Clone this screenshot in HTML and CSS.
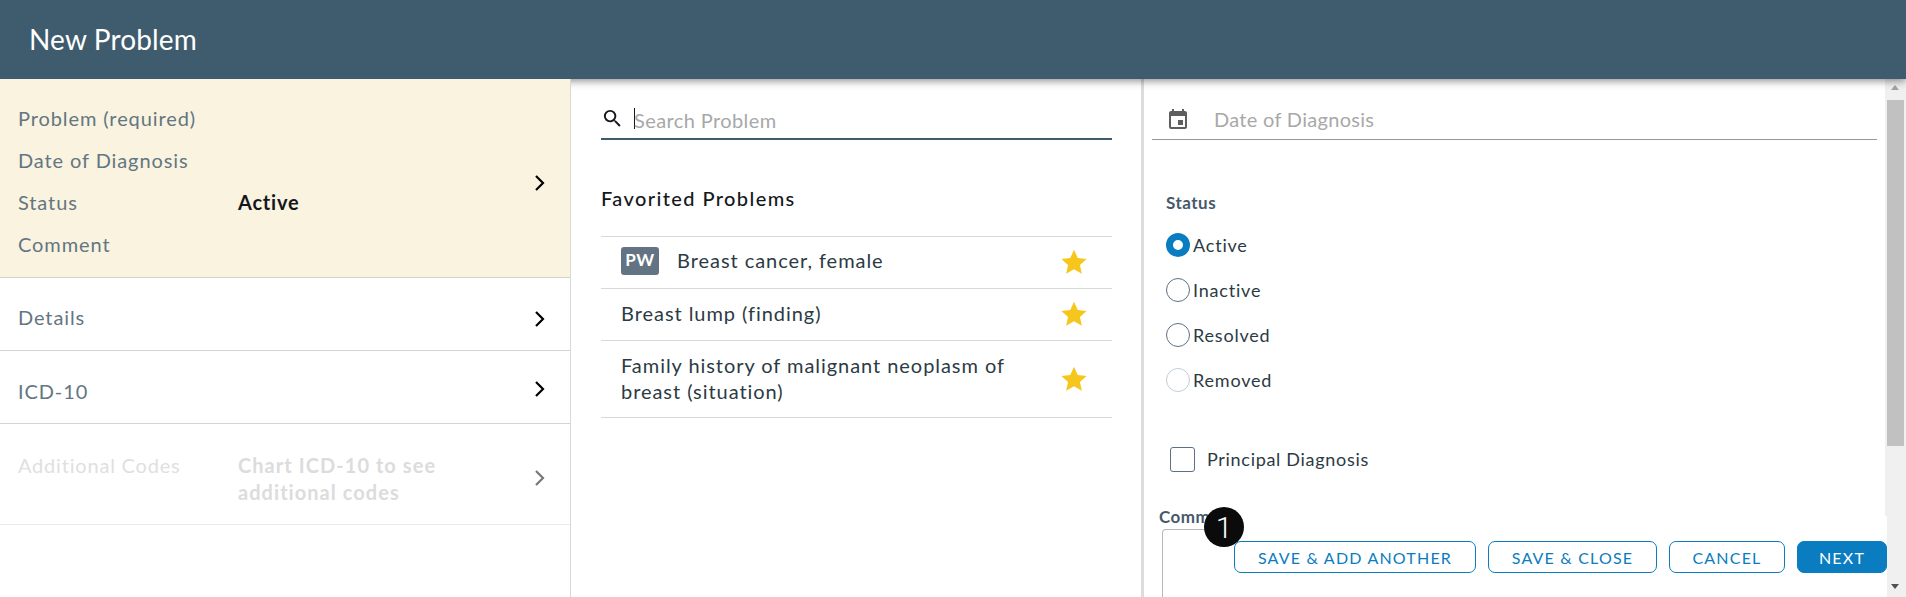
FILE: index.html
```html
<!DOCTYPE html>
<html lang="en">
<head>
<meta charset="utf-8">
<title>New Problem</title>
<link rel="stylesheet" href="styles.css">
</head>
<body>
<header class="topbar"><h1 class="title">New Problem</h1></header>
<main class="layout">
  <nav class="steps">
    <div class="step step-active">
      <div class="step-grid">
        <span class="step-label">Problem (required)</span><span></span>
        <span class="step-label">Date of Diagnosis</span><span></span>
        <span class="step-label">Status</span><span class="step-value">Active</span>
        <span class="step-label">Comment</span><span></span>
      </div>
      <svg class="chev" viewBox="0 0 12 18"><path d="M2 2l7 7-7 7" /></svg>
    </div>
    <div class="step step-plain">
      <span class="step-label">Details</span>
      <svg class="chev" viewBox="0 0 12 18"><path d="M2 2l7 7-7 7" /></svg>
    </div>
    <div class="step step-plain step-icd">
      <span class="step-label">ICD-10</span>
      <svg class="chev chev-up" viewBox="0 0 12 18"><path d="M2 2l7 7-7 7" /></svg>
    </div>
    <div class="step step-disabled">
      <span class="step-label">Additional Codes</span>
      <span class="step-value">Chart ICD-10 to see additional codes</span>
      <svg class="chev" viewBox="0 0 12 18"><path d="M2 2l7 7-7 7" /></svg>
    </div>
  </nav>

  <section class="middle">
    <div class="search">
      <svg class="search-icon" viewBox="0 0 24 24"><path d="M15.5 14h-.79l-.28-.27A6.47 6.47 0 0 0 16 9.5 6.5 6.5 0 1 0 9.5 16c1.61 0 3.09-.59 4.23-1.57l.27.28v.79l5 4.99L20.49 19l-4.99-5zm-6 0C7.01 14 5 11.99 5 9.5S7.01 5 9.5 5 14 7.01 14 9.5 11.99 14 9.5 14z"/></svg>
      <span class="caret"></span><span class="placeholder">Search Problem</span>
    </div>
    <h2 class="fav-title">Favorited Problems</h2>
    <ul class="fav-list">
      <li class="fav-item fav-first"><span class="badge">PW</span><span class="fav-text">Breast cancer, female</span>
        <svg class="star" viewBox="0 0 24 24"><path d="M12 1.5l3.2 7.1 7.6.8-5.7 5.1 1.6 7.6L12 18.3l-6.7 3.8 1.6-7.6L1.200 9.400l7.600-.8z"/></svg></li>
      <li class="fav-item"><span class="fav-text">Breast lump (finding)</span>
        <svg class="star" viewBox="0 0 24 24"><path d="M12 1.5l3.2 7.1 7.6.8-5.7 5.1 1.6 7.6L12 18.3l-6.7 3.8 1.6-7.6L1.200 9.400l7.600-.8z"/></svg></li>
      <li class="fav-item fav-tall"><span class="fav-text">Family history of malignant neoplasm of breast (situation)</span>
        <svg class="star" viewBox="0 0 24 24"><path d="M12 1.5l3.2 7.1 7.6.8-5.7 5.1 1.6 7.6L12 18.3l-6.7 3.8 1.6-7.6L1.200 9.400l7.600-.8z"/></svg></li>
    </ul>
  </section>

  <section class="right">
    <div class="date">
      <svg class="cal-icon" viewBox="0 0 24 24"><path d="M17 12h-5v5h5v-5zM16 1v2H8V1H6v2H5c-1.110 0-1.990.9-1.990 2L3 19a2 2 0 0 0 2 2h14c1.100 0 2-.9 2-2V5c0-1.100-.9-2-2-2h-1V1h-2zm3 18H5V8h14v11z"/></svg>
      <span class="date-text">Date of Diagnosis</span>
    </div>
    <div class="field-title">Status</div>
    <div class="radios">
      <label class="radio"><span class="dot dot-on"></span>Active</label>
      <label class="radio"><span class="dot"></span>Inactive</label>
      <label class="radio"><span class="dot"></span>Resolved</label>
      <label class="radio"><span class="dot dot-off"></span>Removed</label>
    </div>
    <label class="check"><span class="box"></span>Principal Diagnosis</label>
    <div class="comment-label">Comment</div>
    <div class="comment-box"></div>
  </section>

  <div class="scrollbar">
    <span class="arrow arrow-up"></span>
    <span class="thumb"></span>
    <span class="arrow arrow-down"></span>
  </div>

  <footer class="actions">
    <span class="num">1</span>
    <button class="btn">SAVE &amp; ADD ANOTHER</button>
    <button class="btn btn-close">SAVE &amp; CLOSE</button>
    <button class="btn btn-cancel">CANCEL</button>
    <button class="btn btn-next">NEXT</button>
  </footer>
</main>
</body>
</html>
```
FILE: styles.css
```css
* { box-sizing: border-box; }
html, body { margin: 0; height: 100%; overflow: hidden; background: #fff; }
body { font-family: Lato, "Noto Sans", sans-serif; color: #2c3a44; }

.topbar { height: 79px; background: #3e5c6e; display: flex; align-items: center; padding: 0 0 1px 29px; position: relative; z-index: 2; box-shadow: 0 2px 8px rgba(0,0,0,.45); }
.title { margin: 0; font-size: 28px; font-weight: 400; color: #fff; letter-spacing: .15px; }

.layout { position: relative; display: flex; height: 518px; }

.steps { width: 571px; flex: none; border-right: 1px solid #d8d8d8; position: relative; z-index: 3; background: #fff; }
.step { display: flex; padding: 0 18px; border-bottom: 1px solid #d4d4d4; font-size: 20px; letter-spacing: .9px; }
.step-active { height: 199px; background: #f9f3e0; align-items: center; }
.step-grid { display: grid; grid-template-columns: 220px 1fr; grid-auto-rows: 42px; align-items: center; flex: 1; margin-top: 6px; }
.step-label { color: #637682; }
.step-value { color: #14181c; font-weight: 700; letter-spacing: .8px; }
.chev { width: 12px; height: 18px; margin-left: auto; margin-right: 6px; flex: none; fill: none; stroke: #000; stroke-width: 2.2; }
.step-active .chev { margin-top: 9px; }
.step-plain { height: 73px; align-items: center; }
.step-plain .step-label { margin-top: 6px; }
.step-plain .chev { margin-top: 9px; }
.step-icd .step-label { margin-top: 8px; }
.step-icd .chev { margin-top: 3px; }
.step-disabled { height: 101px; padding-top: 28px; border-bottom-color: #ebebeb; }
.step-disabled .step-label { width: 220px; flex: none; color: #e0e0e0; line-height: 27px; letter-spacing: .8px; }
.step-disabled .step-value { width: 240px; color: #dcdcdc; line-height: 27px; font-weight: 700; letter-spacing: 1.05px; }
.step-disabled .chev { stroke: #777; margin-top: 17px; }

.middle { width: 573px; flex: none; padding: 0 29px 0 30px; border-right: 3px solid #dcdcdc; }
.search { height: 62px; margin-top: -1px; border-bottom: 2px solid #3e5c6e; display: flex; align-items: center; padding-top: 21px; position: relative; }
.search-icon { width: 23px; height: 23px; margin: 0 10px 0 0; fill: #14181c; }
.caret { width: 1px; height: 21px; background: #14181c; margin-right: -1px; }
.placeholder { font-size: 20px; color: #a8a8a8; letter-spacing: .4px; padding-top: 2px; }
.fav-title { margin: 47px 0 0; height: 49px; font-size: 20px; font-weight: 500; color: #14181c; letter-spacing: 1.4px; line-height: 22px; }
.fav-list { list-style: none; margin: 0; padding: 0; border-top: 1px solid #d8d8d8; }
.fav-item { height: 52px; display: flex; align-items: center; padding: 0 24px 0 20px; border-bottom: 1px solid #d8d8d8; font-size: 20px; letter-spacing: .95px; color: #2c3a44; }
.fav-text { margin-bottom: 4px; }
.fav-first .fav-text { margin-bottom: 5px; }
.fav-tall { height: 77px; line-height: 26px; }
.fav-tall .fav-text { width: 420px; margin-bottom: 3px; }
.badge { width: 38px; height: 28px; background: #637384; border-radius: 3px; color: #fff; font-size: 17px; font-weight: 700; display: flex; align-items: center; justify-content: center; margin: 0 18px 3px 0; letter-spacing: .5px; padding-bottom: 3px; }
.star { width: 28px; height: 28px; margin: 0 0 1px auto; fill: #f6c61c; flex: none; }

.right { flex: 1; padding: 0 29px 0 8px; min-width: 0; }
.date { height: 61px; border-bottom: 1px solid #999; display: flex; align-items: center; padding: 21px 0 0 14px; }
.cal-icon { width: 24px; height: 24px; fill: #5f5f5f; flex: none; }
.date-text { font-size: 20px; color: #a8a8a8; margin: 0 0 2px 24px; letter-spacing: .3px; }
.field-title { margin: 52px 0 0 14px; font-size: 17px; line-height: 22px; font-weight: 700; color: #46596a; letter-spacing: .5px; }
.radios { margin: 19px 0 0 14px; display: flex; flex-direction: column; gap: 21px; }
.radio { display: flex; align-items: center; height: 24px; font-size: 18px; letter-spacing: .8px; color: #2c3a44; }
.dot { width: 24px; height: 24px; border-radius: 50%; border: 1px solid #5c7086; margin-right: 3px; background: #fff; }
.dot-on { border: 7px solid #0a7cc0; background: #fff; }
.dot-off { border-color: #c2ccd4; }
.check { display: flex; align-items: center; height: 26px; margin: 54px 0 0 18px; font-size: 18px; letter-spacing: .7px; color: #2c3a44; }
.box { width: 25px; height: 25px; border: 1px solid #5c7086; border-radius: 3px; margin-right: 12px; }
.comment-label { margin: 34px 0 0 7px; font-size: 17px; line-height: 22px; font-weight: 700; color: #46596a; letter-spacing: .5px; }
.comment-box { margin: 1px 0 0 10px; height: 68px; border: 1px solid #b8b8b8; border-bottom: 0; border-radius: 4px 4px 0 0; }

.scrollbar { position: absolute; right: 0; top: 0; bottom: 0; width: 21px; background: #f0f0f0; z-index: 1; }
.thumb { position: absolute; left: 2px; width: 17px; top: 21px; height: 346px; background: #c1c1c1; }
.arrow { position: absolute; left: 6px; width: 0; height: 0; border-left: 4.500px solid transparent; border-right: 4.500px solid transparent; }
.arrow-up { top: 6px; border-bottom: 5px solid #a3a3a3; }
.arrow-down { bottom: 8px; border-top: 5px solid #505050; }

.actions { position: absolute; left: 1220px; right: 19px; top: 437px; height: 81px; background: #fff; display: flex; align-items: flex-start; justify-content: flex-end; gap: 12px; padding-top: 25px; z-index: 4; }
.btn { height: 32px; border: 1px solid #0a7cc0; border-radius: 7px; background: #fff; color: #0a7cc0; font-family: inherit; font-size: 16px; letter-spacing: 1.2px; padding: 0; width: 242px; }
.btn-close { width: 169px; }
.btn-cancel { width: 116px; }
.btn-next { width: 90px; background: #0a7cc0; color: #fff; }
.num { position: absolute; left: -16px; top: -9px; width: 40px; height: 40px; border-radius: 50%; background: #0b0b0b; color: #fff; font-family: Roboto, sans-serif; font-size: 30px; font-weight: 300; display: flex; align-items: center; justify-content: center; }
```
